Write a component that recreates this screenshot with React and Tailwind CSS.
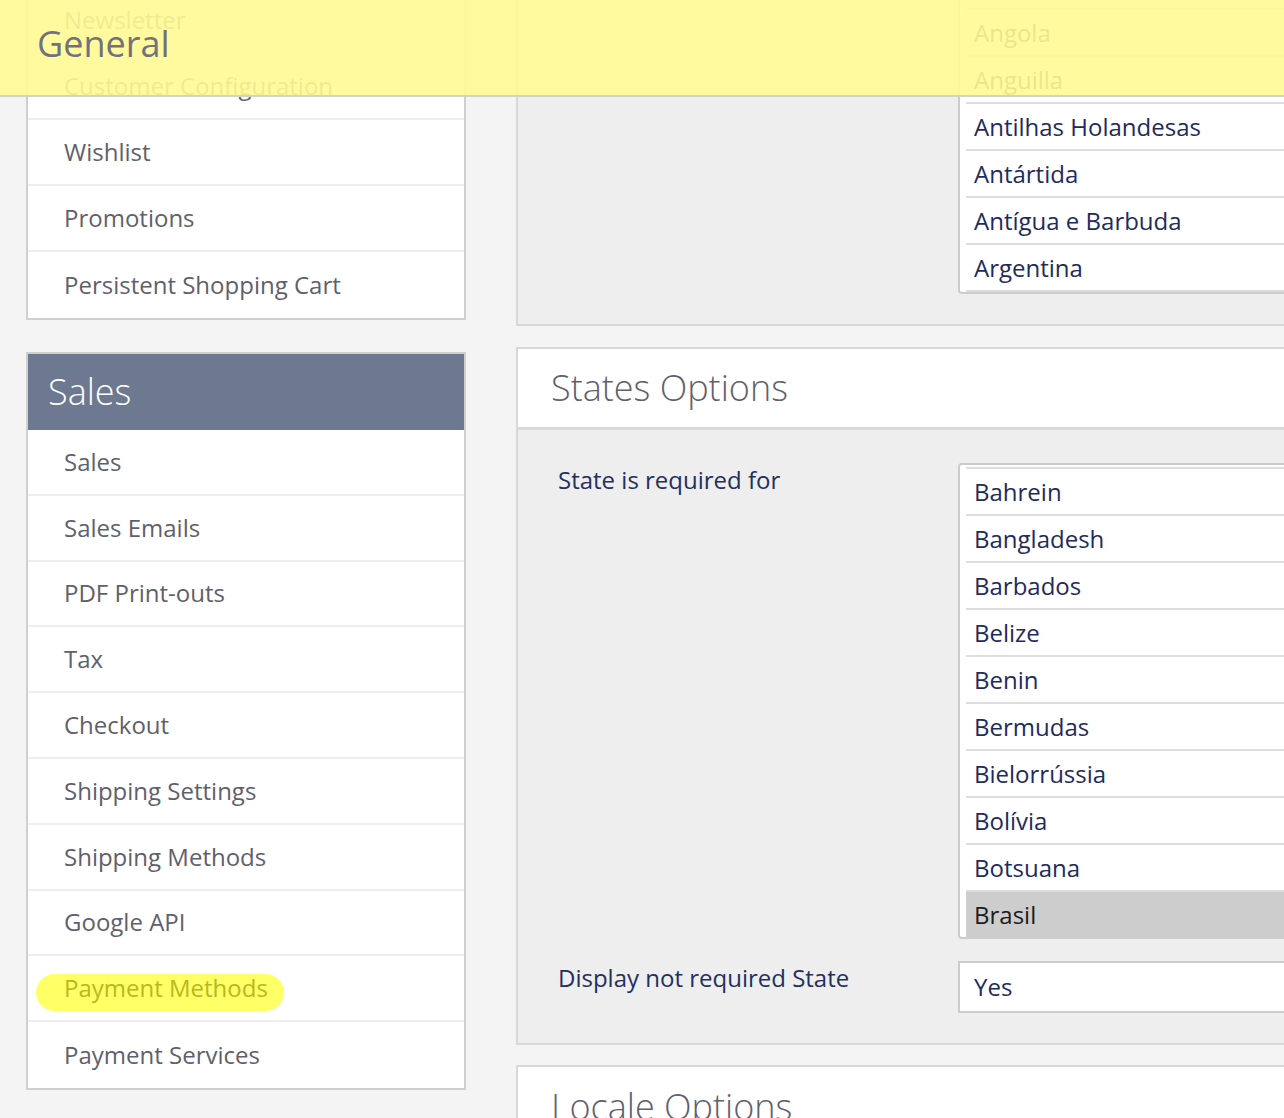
import React from 'react';

const generalItems = ['Newsletter', 'Customer Configuration', 'Wishlist', 'Promotions', 'Persistent Shopping Cart'];

const salesItems = [
    'Sales',
    'Sales Emails',
    'PDF Print-outs',
    'Tax',
    'Checkout',
    'Shipping Settings',
    'Shipping Methods',
    'Google API',
    'Payment Methods',
    'Payment Services',
];

const topCountries = ['Andorra', 'Angola', 'Anguilla', 'Antilhas Holandesas', 'Antártida', 'Antígua e Barbuda', 'Argentina'];

const stateCountries = ['Bahrein', 'Bangladesh', 'Barbados', 'Belize', 'Benin', 'Bermudas', 'Bielorrússia', 'Bolívia', 'Botsuana', 'Brasil'];

function NavItem({ label, last, marked, tight }) {
    return (
        <div className={`${tight ? 'h-[65.8px]' : 'h-[66px]'} flex items-center pl-[36px] bg-white ${last ? '' : 'border-b-2 border-[#eeeeee]'}`}>
            {marked ? (
                <span className="relative">
                    <span className="absolute -left-[28px] -right-[16px] top-[4px] bottom-[-5px] rounded-full bg-[#ffff66]" />
                    <span className="relative text-[#b8b81e]">{label}</span>
                </span>
            ) : (
                <span>{label}</span>
            )}
        </div>
    );
}

function MultiSelect({ options, selected }) {
    return (
        <div className="border-2 border-[#cccccc] rounded-[4px] bg-white pt-[2px] pl-[6px] w-[360px]">
            {options.map((o, i) => {
                const isLast = i === options.length - 1;
                const isSel = o === selected;
                return (
                    <div
                        key={o}
                        className={`h-[47px] border-t-2 border-[#dddddd] flex items-center pl-[8px] ${isLast && !isSel ? 'border-b-2 h-[49px]' : ''} ${isSel ? 'bg-[#cdcdcd] text-[#1c1c1c]' : 'text-[#1f2b5c]'}`}
                    >
                        {o}
                    </div>
                );
            })}
        </div>
    );
}

function App() {
    return (
        <div className="relative w-[1284px] h-[1118px] overflow-hidden bg-[#f4f4f4] font-['Open_Sans',sans-serif] text-[24px]">
            <div className="flex pl-[26px] gap-[50px] items-start">
                {/* Sidebar */}
                <div className="w-[440px] shrink-0 -mt-[14px] text-[#5f5f6d]">
                    <div className="border-2 border-[#cfcfcf]">
                        {generalItems.map((it, i) => (
                            <NavItem key={it} label={it} last={i === generalItems.length - 1} />
                        ))}
                    </div>

                    <div className="mt-[32px] border-2 border-[#cfcfcf]">
                        <div className="h-[76px] bg-[#6d7891] flex items-center pl-[20px] text-white text-[36px] font-light">Sales</div>
                        {salesItems.map((it, i) => (
                            <NavItem key={it} label={it} tight last={i === salesItems.length - 1} marked={it === 'Payment Methods'} />
                        ))}
                    </div>
                </div>

                {/* Main */}
                <div className="w-[820px] shrink-0 -mt-[74px]">
                    <div className="border-2 border-[#d8d8d8] bg-[#eeeeee] pt-[29px] pb-[30px] flex">
                        <div className="w-[440px] pl-[40px] pt-[3px] leading-[28px] text-[#23305f]">Allow Countries</div>
                        <MultiSelect options={topCountries} />
                    </div>

                    <div className="mt-[21px] border-2 border-[#d8d8d8] bg-[#eeeeee]">
                        <div className="h-[81px] bg-white flex items-center pl-[33px] text-[36px] font-light text-[#5f6070] border-b-[3px] border-[#d9d9d9]">States Options</div>
                        <div className="pt-[33px] pb-[30px]">
                            <div className="flex">
                                <div className="w-[440px] pl-[40px] pt-[3px] leading-[28px] text-[#23305f]">State is required for</div>
                                <MultiSelect options={stateCountries} selected="Brasil" />
                            </div>
                            <div className="flex mt-[22px]">
                                <div className="w-[440px] pl-[40px] pt-[3px] leading-[28px] text-[#23305f]">Display not required State</div>
                                <div className="w-[360px] h-[52px] border-2 border-[#cccccc] bg-white flex items-center pl-[14px] text-[#1f2b5c]">Yes</div>
                            </div>
                        </div>
                    </div>

                    <div className="mt-[20px] border-2 border-[#d8d8d8] bg-[#eeeeee]">
                        <div className="h-[80px] bg-white flex items-center pl-[33px] text-[36px] font-light text-[#5f6070]">Locale Options</div>
                        <div className="h-[200px]" />
                    </div>
                </div>
            </div>

            {/* Sticky section header */}
            <div className="absolute top-0 left-0 right-0 h-[97px] bg-[rgba(255,250,146,0.9)] border-b-2 border-[#d2d2c8] pl-[37px] pt-[20px]">
                <span className="block text-[36px] leading-[48px] text-[#71717f]">General</span>
            </div>
        </div>
    );
}

export default App;
